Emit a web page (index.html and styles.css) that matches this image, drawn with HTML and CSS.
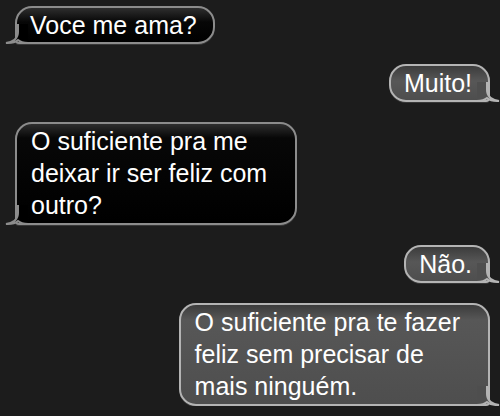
FILE: index.html
```html
<!DOCTYPE html>
<html lang="pt">
<head>
    <meta charset="UTF-8">
    <meta name="viewport" content="width=device-width, initial-scale=1.0">
    <title>Conversa</title>
    <link rel="stylesheet" href="styles.css">
</head>
<body>

<div class="chat">
    <div class="row left">
        <div class="bubble">
            Voce me ama?
            <svg class="tail" width="24" height="20" viewBox="0 0 24 20">
                <path class="tail-fill" d="M14,0 L14,8 Q14,17 2,19 Q10,19.5 14,16 Q17,18.8 24,19 L24,0 Z"/>
                <path class="tail-line" d="M14,0 L14,8 Q14,17 2,19 Q10,19.5 14,16 Q17,18.8 24,19"/>
            </svg>
        </div>
    </div>

    <div class="row right">
        <div class="bubble">
            Muito!
            <svg class="tail" width="24" height="20" viewBox="0 0 24 20">
                <path class="tail-fill" d="M14,0 L14,8 Q14,17 2,19 Q10,19.5 14,16 Q17,18.8 24,19 L24,0 Z"/>
                <path class="tail-line" d="M14,0 L14,8 Q14,17 2,19 Q10,19.5 14,16 Q17,18.8 24,19"/>
            </svg>
        </div>
    </div>

    <div class="row left">
        <div class="bubble long">
            O suficiente pra me<br>deixar ir ser feliz com<br>outro?
            <svg class="tail" width="24" height="20" viewBox="0 0 24 20">
                <path class="tail-fill" d="M14,0 L14,8 Q14,17 2,19 Q10,19.5 14,16 Q17,18.8 24,19 L24,0 Z"/>
                <path class="tail-line" d="M14,0 L14,8 Q14,17 2,19 Q10,19.5 14,16 Q17,18.8 24,19"/>
            </svg>
        </div>
    </div>

    <div class="row right">
        <div class="bubble">
            Não.
            <svg class="tail" width="24" height="20" viewBox="0 0 24 20">
                <path class="tail-fill" d="M14,0 L14,8 Q14,17 2,19 Q10,19.5 14,16 Q17,18.8 24,19 L24,0 Z"/>
                <path class="tail-line" d="M14,0 L14,8 Q14,17 2,19 Q10,19.5 14,16 Q17,18.8 24,19"/>
            </svg>
        </div>
    </div>

    <div class="row right">
        <div class="bubble long">
            O suficiente pra te fazer<br>feliz sem precisar de<br>mais ninguém.
            <svg class="tail" width="24" height="20" viewBox="0 0 24 20">
                <path class="tail-fill" d="M14,0 L14,8 Q14,17 2,19 Q10,19.5 14,16 Q17,18.8 24,19 L24,0 Z"/>
                <path class="tail-line" d="M14,0 L14,8 Q14,17 2,19 Q10,19.5 14,16 Q17,18.8 24,19"/>
            </svg>
        </div>
    </div>
</div>

</body>
</html>
```

FILE: styles.css
```css
body {
    margin: 0;
    background-color: #1c1c1c;
    font-family: "Liberation Sans", Arial, sans-serif;
    color: white;
}
.chat {
    display: flex;
    flex-direction: column;
    gap: 20px;
    padding: 6px 10px 0 15px;
}
.row {
    display: flex;
}
.row.left {
    justify-content: flex-start;
}
.row.right {
    justify-content: flex-end;
}
.bubble {
    position: relative;
    font-size: 25px;
    line-height: 32px;
    padding: 1px 16px 1px 13px;
    border: 2px solid #8c8c8c;
    border-radius: 17px;
    box-shadow: 0 1px 0 rgba(255, 255, 255, 0.12);
}
.bubble.long {
    padding: 1px 28px 2px 14px;
}
.left .bubble {
    background: linear-gradient(#2e2e2e 0px, #070707 14px, #000 100%);
    border-bottom-left-radius: 4px;
}
.right .bubble {
    background: linear-gradient(#3c3c3c 0px, #575757 15px, #4e4e4e 100%);
    border-color: #b4b4b4;
    border-bottom-right-radius: 4px;
}

/* la petite queue de la bulle */
.tail {
    position: absolute;
    bottom: -2px;
    left: -13px;
    overflow: visible;
}
.right .tail {
    left: auto;
    right: -13px;
    transform: scaleX(-1);
}
.tail-line {
    fill: none;
    stroke-width: 2;
}
.left .tail-fill { fill: #000; }
.left .tail-line { stroke: #8c8c8c; }
.right .tail-fill { fill: #4e4e4e; }
.right .tail-line { stroke: #b4b4b4; }
```
